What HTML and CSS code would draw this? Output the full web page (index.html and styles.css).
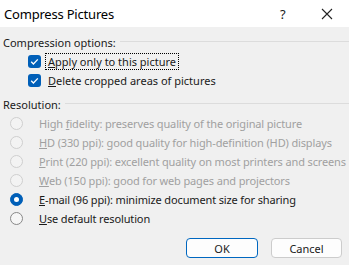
FILE: index.html
```html
<!DOCTYPE html>
<html lang="en">

<head>
    <meta charset="UTF-8">
    <title>Compress Pictures</title>
    <link rel="stylesheet" href="styles.css">
</head>

<body>
    <div class="dialog">
        <div class="titlebar">
            <span class="title">Compress Pictures</span>
            <span class="help">?</span>
            <span class="close">
                <svg width="12" height="12" viewBox="0 0 12 12"><path d="M1 1L11 11M11 1L1 11" stroke="#222" stroke-width="1.1" fill="none"/></svg>
            </span>
        </div>
        <div class="content">
            <div class="group-head"><span>Compression options:</span><i></i></div>
            <div class="check-row">
                <span class="checkbox"><svg width="13" height="13" viewBox="0 0 13 13"><path d="M3.2 6.8L5.4 9L9.8 4.4" stroke="#fff" stroke-width="1.3" fill="none"/></svg></span>
                <span class="label focus"><u>A</u>pply only to this picture</span>
            </div>
            <div class="check-row">
                <span class="checkbox"><svg width="13" height="13" viewBox="0 0 13 13"><path d="M3.2 6.8L5.4 9L9.8 4.4" stroke="#fff" stroke-width="1.3" fill="none"/></svg></span>
                <span class="label"><u>D</u>elete cropped areas of pictures</span>
            </div>

            <div class="group-head second"><span>Resolution:</span><i></i></div>
            <div class="radio-row disabled"><span class="radio"></span><span class="label">High <u>f</u>idelity: preserves quality of the original picture</span></div>
            <div class="radio-row disabled"><span class="radio"></span><span class="label"><u>H</u>D (330 ppi): good quality for high-definition (HD) displays</span></div>
            <div class="radio-row disabled"><span class="radio"></span><span class="label"><u>P</u>rint (220 ppi): excellent quality on most printers and screens</span></div>
            <div class="radio-row disabled"><span class="radio"></span><span class="label"><u>W</u>eb (150 ppi): good for web pages and projectors</span></div>
            <div class="radio-row"><span class="radio checked"></span><span class="label"><u>E</u>-mail (96 ppi): minimize document size for sharing</span></div>
            <div class="radio-row"><span class="radio"></span><span class="label"><u>U</u>se default resolution</span></div>

            <div class="buttons">
                <button class="btn default">OK</button>
                <button class="btn">Cancel</button>
            </div>
        </div>
    </div>
</body>

</html>
```

FILE: styles.css
```css
html,
body {
    margin: 0;
    padding: 0;
}

body {
    font-family: "Noto Sans", "Liberation Sans", sans-serif;
    font-size: 11px;
    color: #1a1a1a;
    background: #f0f0f0;
}

.dialog {
    width: 349px;
    height: 265px;
    overflow: hidden;
}

.titlebar {
    height: 27px;
    background: #fff;
    display: flex;
    align-items: center;
    padding-left: 4px;
}

.title {
    font-size: 13px;
    letter-spacing: -0.2px;
    flex: 1;
    color: #000;
}

.help {
    font-size: 13px;
    width: 12px;
    margin-right: 29px;
}

.close {
    width: 12px;
    margin-right: 16px;
    display: flex;
}

.content {
    padding: 6px 0 0 3px;
}

.group-head {
    display: flex;
    align-items: center;
    height: 19px;
    line-height: 19px;
}

.group-head i {
    flex: 1;
    height: 1px;
    background: #dcdcdc;
    margin-left: 4px;
    margin-top: -3px;
}

.group-head.second {
    margin-top: 5px;
}

.check-row,
.radio-row {
    display: flex;
    align-items: center;
    height: 19px;
    line-height: 19px;
}

.check-row {
    padding-left: 25px;
}

.radio-row {
    padding-left: 7px;
}

.checkbox {
    flex-shrink: 0;
    width: 13px;
    height: 13px;
    border-radius: 3px;
    background: #005fb8;
    display: flex;
    margin-right: 4px;
}

.label {
    white-space: nowrap;
    padding: 0 2px;
    line-height: 15px;
    border: 1px dotted transparent;
}

.radio-row .label {
    letter-spacing: -0.14px;
}

.label.focus {
    border-color: #000;
}

.radio {
    flex-shrink: 0;
    width: 11px;
    height: 11px;
    border: 1px solid #888;
    border-radius: 50%;
    background: #f6f6f6;
    margin-right: 13px;
    position: relative;
}

.radio.checked {
    background: #005fb8;
    border-color: #005fb8;
}

.radio.checked:after {
    content: '';
    position: absolute;
    width: 5px;
    height: 5px;
    border-radius: 50%;
    background: #fff;
    left: 3px;
    top: 3px;
}

.disabled .radio {
    border-color: #cfcfcf;
    background: #f3f3f3;
}

.disabled .label {
    color: #a0a0a0;
}

.buttons {
    display: flex;
    justify-content: flex-end;
    gap: 13px;
    margin-top: 10px;
    padding-right: 7px;
}

.btn {
    font-family: inherit;
    font-size: 11px;
    width: 71px;
    height: 20px;
    padding: 0;
    border: 1px solid #cccccc;
    border-radius: 4px;
    background: #fdfdfd;
    color: #1a1a1a;
}

.btn.default {
    border-color: #0067c0;
    width: 72px;
}
```
